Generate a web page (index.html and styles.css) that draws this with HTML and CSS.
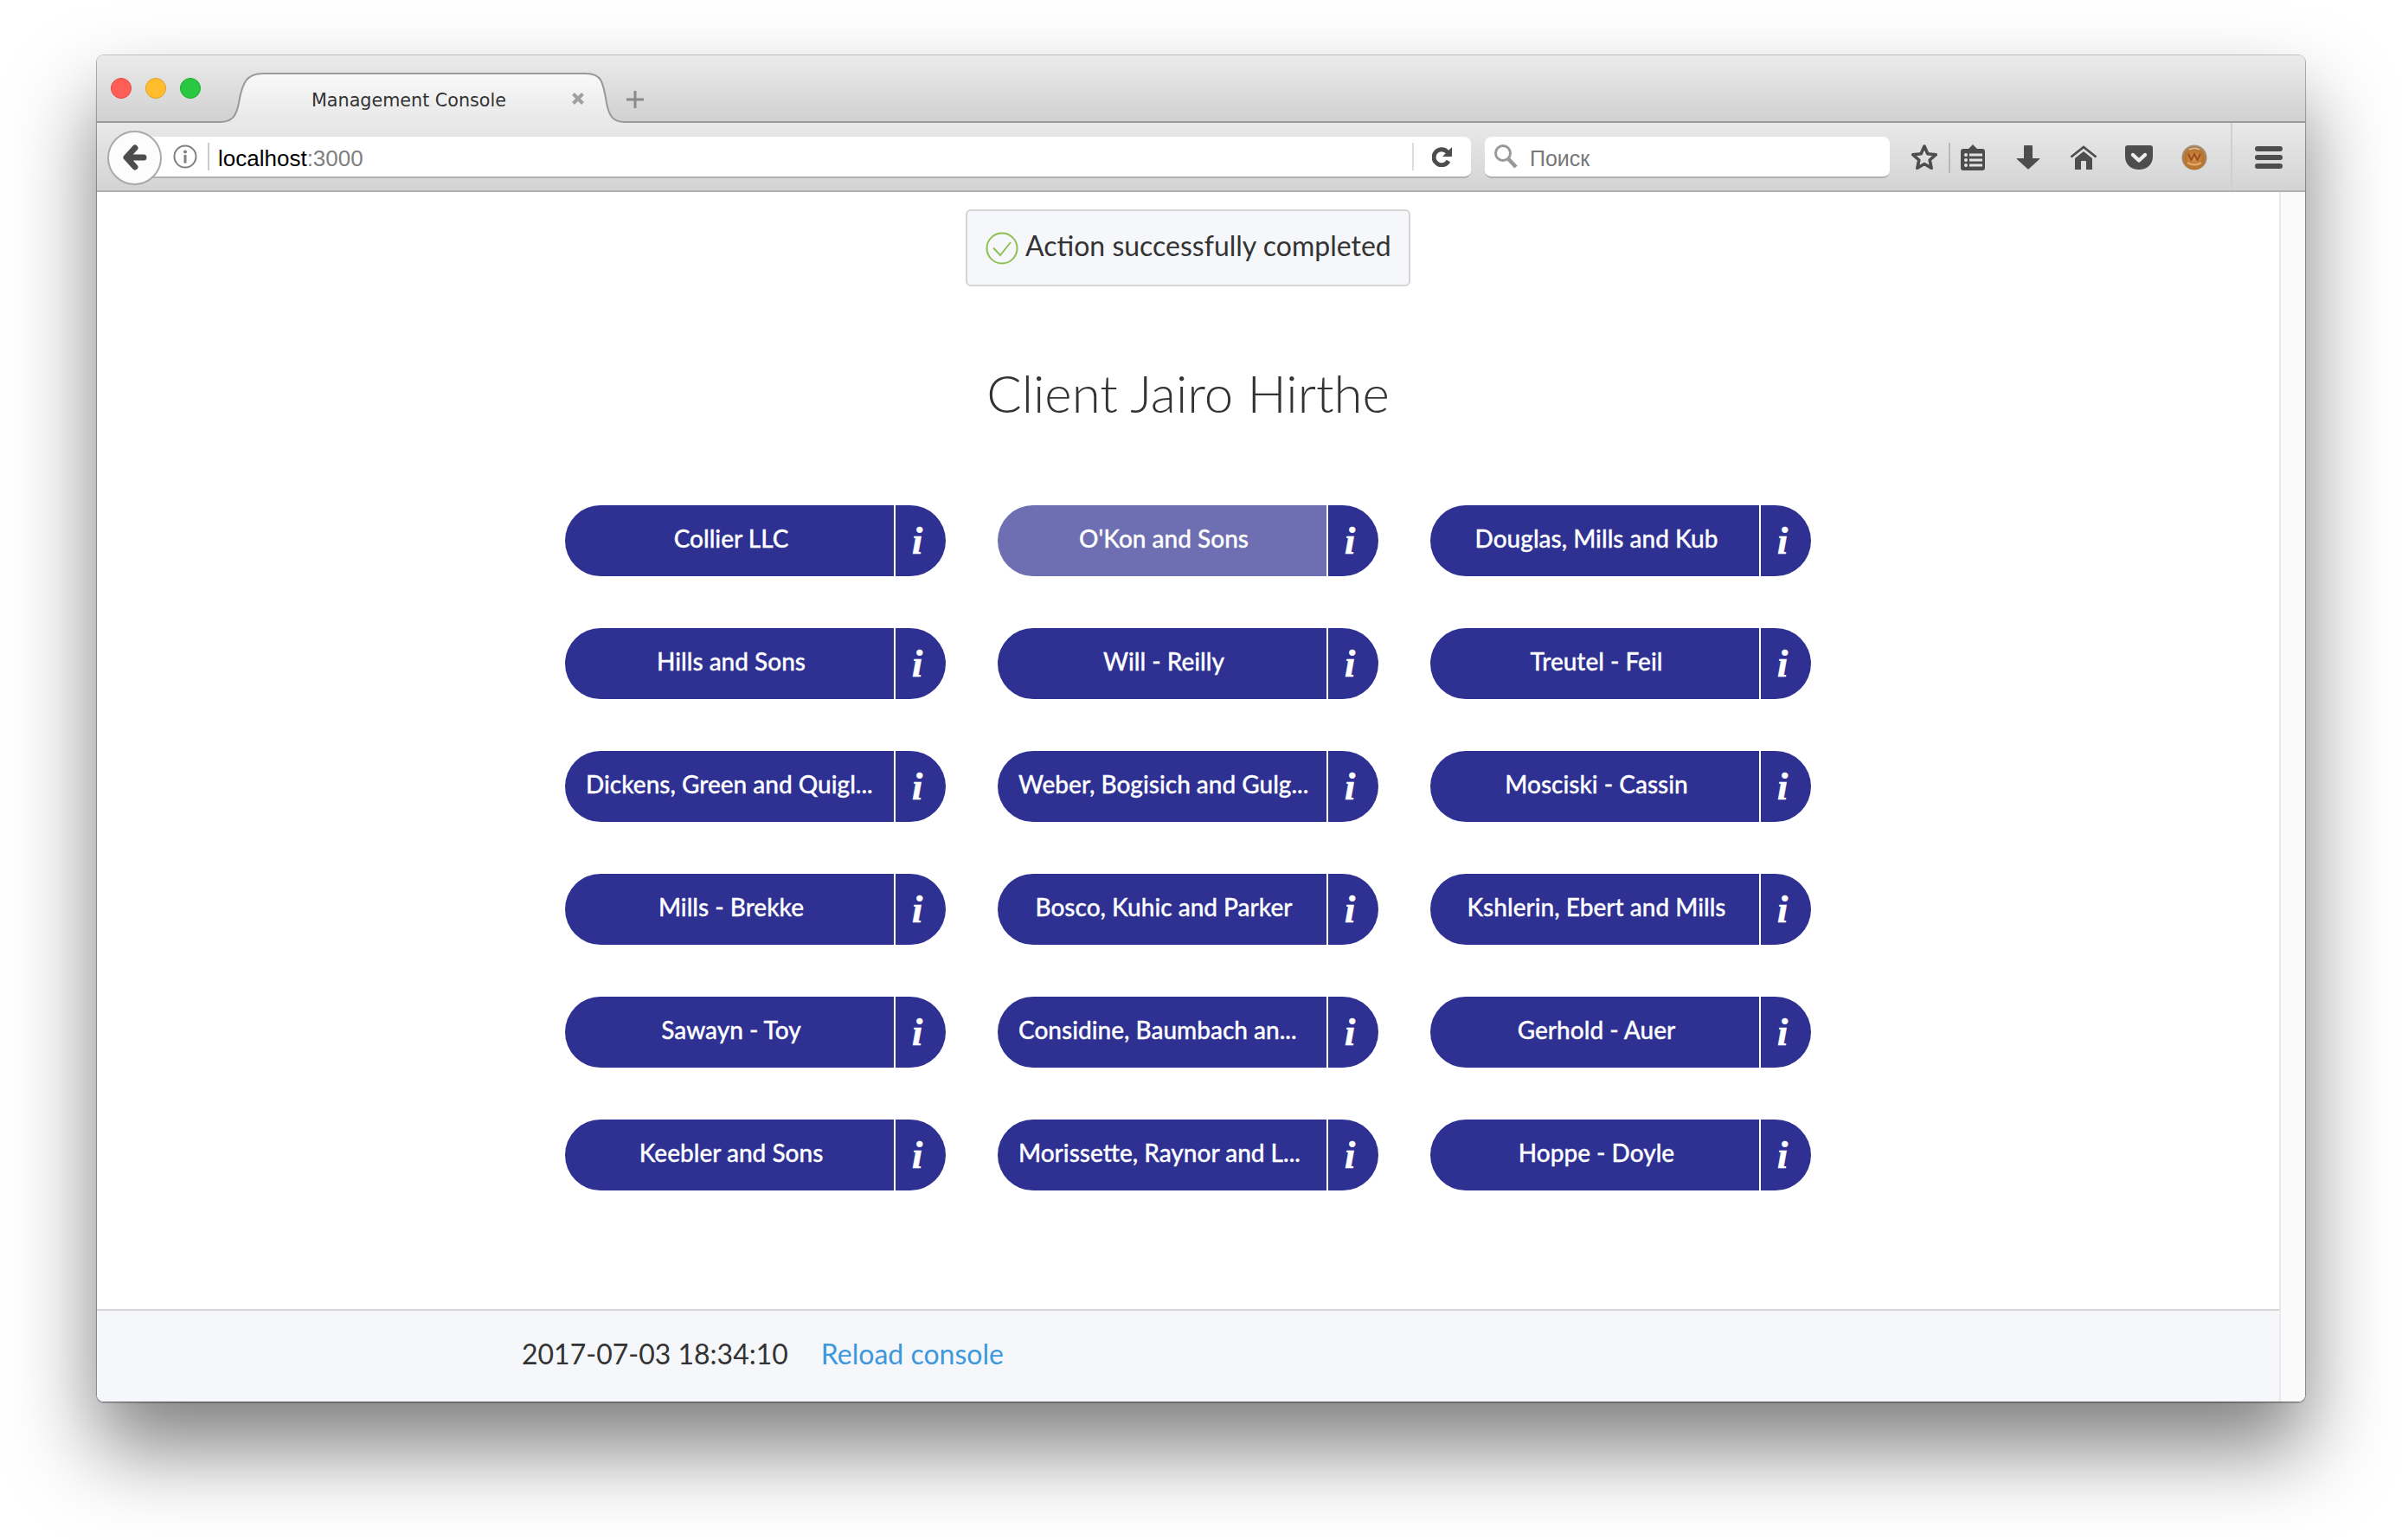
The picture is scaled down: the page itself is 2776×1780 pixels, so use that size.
FILE: index.html
```html
<!DOCTYPE html>
<html lang="en">
<head>
    <meta charset="UTF-8">
    <title>Management Console</title>
    <link rel="stylesheet" href="styles.css">
</head>
<body>
    <div class="window">
        <div class="titlebar">
            <div class="lights">
                <span class="light red"></span>
                <span class="light yellow"></span>
                <span class="light green"></span>
            </div>
            <div class="tab">
                <svg class="tab-shape" width="469" height="58" viewBox="0 0 469 58">
                    <defs>
                        <linearGradient id="tabfill" x1="0" y1="0" x2="0" y2="1">
                            <stop offset="0" stop-color="#f9f9f9"/>
                            <stop offset="1" stop-color="#e8e8e8"/>
                        </linearGradient>
                    </defs>
                    <path d="M0 57C16 57 20 50 23 35C27 10 33 1 51 1L424 1C442 1 444 10 448 35C451 50 455 57 469 57L469 58L0 58Z" fill="url(#tabfill)"/>
                    <path d="M0 57C16 57 20 50 23 35C27 10 33 1 51 1L424 1C442 1 444 10 448 35C451 50 455 57 469 57" fill="none" stroke="#999" stroke-width="2"/>
                </svg>
                <span class="tab-title">Management Console</span>
                <svg class="tab-close" width="16" height="16" viewBox="0 0 16 16">
                    <path d="M2.5 2.5L13.5 13.5M13.5 2.5L2.5 13.5" stroke="#a0a0a0" stroke-width="4" fill="none"/>
                </svg>
            </div>
            <svg class="new-tab" width="22" height="22" viewBox="0 0 22 22">
                <path d="M11 1V21M1 11H21" stroke="#8a8a8a" stroke-width="3" fill="none"/>
            </svg>
        </div>

        <div class="toolbar">
            <div class="back">
                <svg width="28" height="30" viewBox="0 0 28 30">
                    <path d="M14 4L4 15L14 26M5 15H24" stroke="#4d4d4d" stroke-width="7" stroke-linecap="round" stroke-linejoin="round" fill="none"/>
                </svg>
            </div>
            <div class="urlbar">
                <svg class="site-info" width="28" height="28" viewBox="0 0 28 28">
                    <circle cx="14" cy="14" r="12.5" stroke="#808080" stroke-width="2" fill="#fff"/>
                    <circle cx="14" cy="8.5" r="2" fill="#808080"/>
                    <rect x="12.5" y="12" width="3" height="9.5" fill="#808080"/>
                </svg>
                <span class="url"><span class="host">localhost</span>:3000</span>
                <div class="reload">
                    <svg width="24" height="24" viewBox="0 0 24 24">
                        <path d="M18 7A9 9 0 1 0 19 17" stroke="#4d4d4d" stroke-width="5" fill="none"/>
                        <polygon points="23,1 23,12 12,12" fill="#4d4d4d"/>
                    </svg>
                </div>
            </div>
            <div class="searchbar">
                <svg width="30" height="30" viewBox="0 0 30 30">
                    <circle cx="12" cy="11" r="8.5" stroke="#999" stroke-width="3" fill="none"/>
                    <path d="M18 17.5L27 27" stroke="#999" stroke-width="4.5" fill="none"/>
                </svg>
                <span>Поиск</span>
            </div>
            <div class="tool tool-star">
                <svg width="32" height="32" viewBox="0 0 32 32">
                    <polygon points="16,3 19.8,11.7 29.3,12.7 22.2,19 24.2,28.3 16,23.5 7.8,28.3 9.8,19 2.7,12.7 12.2,11.7" stroke="#4d4d4d" stroke-width="3.6" stroke-linejoin="round" fill="none"/>
                </svg>
            </div>
            <span class="tool-sep"></span>
            <div class="tool tool-list">
                <svg width="28" height="30" viewBox="0 0 28 30">
                    <path d="M14 0L19 5H25Q28 5 28 8V27Q28 30 25 30H3Q0 30 0 27V8Q0 5 3 5H9Z" fill="#4d4d4d"/>
                    <circle cx="6" cy="12" r="2" fill="#e2e2e2"/>
                    <circle cx="6" cy="18" r="2" fill="#e2e2e2"/>
                    <circle cx="6" cy="24" r="2" fill="#e2e2e2"/>
                    <rect x="10" y="10.5" width="15" height="3" fill="#e2e2e2"/>
                    <rect x="10" y="16.5" width="15" height="3" fill="#e2e2e2"/>
                    <rect x="10" y="22.5" width="15" height="3" fill="#e2e2e2"/>
                </svg>
            </div>
            <div class="tool">
                <svg width="28" height="28" viewBox="0 0 28 28">
                    <path d="M9 1Q9 0 10 0H18Q19 0 19 1V15H27Q28 15 27 16L15 27Q14 28 13 27L1 16Q0 15 1 15H9Z" fill="#4d4d4d"/>
                </svg>
            </div>
            <div class="tool">
                <svg width="32" height="28" viewBox="0 0 32 28">
                    <path d="M1.5 13.5L16 2L30.5 13.5" stroke="#4d4d4d" stroke-width="2.8" fill="none"/>
                    <path d="M16 7L26 15V28H19V18H13V28H6V15Z" fill="#4d4d4d"/>
                </svg>
            </div>
            <div class="tool">
                <svg width="32" height="28" viewBox="0 0 32 28">
                    <path d="M3 0H29Q32 0 32 3V13C32 22 25 28 16 28C7 28 0 22 0 13V3Q0 0 3 0Z" fill="#4d4d4d"/>
                    <path d="M9 11L16 17.5L23 11" stroke="#ececec" stroke-width="4.4" stroke-linecap="round" stroke-linejoin="round" fill="none"/>
                </svg>
            </div>
            <div class="tool">
                <svg width="30" height="30" viewBox="0 0 30 30">
                    <defs>
                        <radialGradient id="avatarfill" cx="0.5" cy="0.55" r="0.55">
                            <stop offset="0" stop-color="#d98d45"/>
                            <stop offset="0.7" stop-color="#b5742f"/>
                            <stop offset="1" stop-color="#a39484"/>
                        </radialGradient>
                    </defs>
                    <circle cx="15" cy="15" r="14.5" fill="url(#avatarfill)"/>
                    <path d="M8 11L11.5 18L15 11L18.5 18L22 11" stroke="#9c4a22" stroke-width="1.8" fill="none"/>
                    <path d="M7 21Q15 26 23 21" stroke="#e8b070" stroke-width="2" fill="none"/>
                    <path d="M9 6Q15 3 21 6" stroke="#e0c0a0" stroke-width="1.5" fill="none"/>
                </svg>
            </div>
            <span class="tool-divider"></span>
            <div class="tool tool-menu">
                <span class="menu-icon">
                    <span></span>
                    <span></span>
                    <span></span>
                </span>
            </div>
        </div>

        <div class="viewport">
            <div class="page">
                <main class="content">
                    <div class="notice">
                        <svg width="38" height="38" viewBox="0 0 38 38">
                            <circle cx="19" cy="19" r="17.5" stroke="#8cc152" stroke-width="2" fill="none"/>
                            <path d="M9 18.5L17 27L29 12" stroke="#8cc152" stroke-width="2" fill="none"/>
                        </svg>
                        <span>Action successfully completed</span>
                    </div>
                    <h1>Client Jairo Hirthe</h1>
                    <div class="companies">
                        <div class="company"><a class="company-name">Collier LLC</a><a class="company-info">i</a></div>
                        <div class="company hover"><a class="company-name">O'Kon and Sons</a><a class="company-info">i</a></div>
                        <div class="company"><a class="company-name">Douglas, Mills and Kub</a><a class="company-info">i</a></div>
                        <div class="company"><a class="company-name">Hills and Sons</a><a class="company-info">i</a></div>
                        <div class="company"><a class="company-name">Will - Reilly</a><a class="company-info">i</a></div>
                        <div class="company"><a class="company-name">Treutel - Feil</a><a class="company-info">i</a></div>
                        <div class="company"><a class="company-name cut">Dickens, Green and Quigl...</a><a class="company-info">i</a></div>
                        <div class="company"><a class="company-name cut">Weber, Bogisich and Gulg...</a><a class="company-info">i</a></div>
                        <div class="company"><a class="company-name">Mosciski - Cassin</a><a class="company-info">i</a></div>
                        <div class="company"><a class="company-name">Mills - Brekke</a><a class="company-info">i</a></div>
                        <div class="company"><a class="company-name">Bosco, Kuhic and Parker</a><a class="company-info">i</a></div>
                        <div class="company"><a class="company-name">Kshlerin, Ebert and Mills</a><a class="company-info">i</a></div>
                        <div class="company"><a class="company-name">Sawayn - Toy</a><a class="company-info">i</a></div>
                        <div class="company"><a class="company-name cut">Considine, Baumbach an...</a><a class="company-info">i</a></div>
                        <div class="company"><a class="company-name">Gerhold - Auer</a><a class="company-info">i</a></div>
                        <div class="company"><a class="company-name">Keebler and Sons</a><a class="company-info">i</a></div>
                        <div class="company"><a class="company-name cut">Morissette, Raynor and L...</a><a class="company-info">i</a></div>
                        <div class="company"><a class="company-name">Hoppe - Doyle</a><a class="company-info">i</a></div>
                    </div>
                </main>
                <footer class="footer">
                    <span class="timestamp">2017-07-03 18:34:10</span>
                    <a class="reload-link">Reload console</a>
                </footer>
            </div>
            <div class="scrollbar"></div>
        </div>
    </div>
</body>
</html>
```

FILE: styles.css
```css
html, body {
    margin: 0;
    padding: 0;
}
body {
    height: 1780px;
    box-sizing: border-box;
    padding: 64px 112px 160px 112px;
    background: #fff;
    overflow: hidden;
    font-family: "Lato", sans-serif;
    color: #333;
}
.window {
    height: 100%;
    display: flex;
    flex-direction: column;
    border-radius: 8px;
    overflow: hidden;
    box-shadow: 0 0 0 1px rgba(0,0,0,0.2), 0 1px 2px rgba(0,0,0,0.4), 0 54px 96px rgba(0,0,0,0.5);
}

/* title bar */
.titlebar {
    height: 78px;
    flex: none;
    display: flex;
    align-items: flex-end;
    background: linear-gradient(#ebebeb, #d0d0d0);
    box-shadow: inset 0 -2px 0 #9a9a9a;
}
.lights {
    align-self: flex-start;
    display: flex;
    gap: 16px;
    margin: 26px 21px 0 16px;
}
.light {
    width: 24px;
    height: 24px;
    box-sizing: border-box;
    border-radius: 50%;
    border: 1px solid;
}
.red { background: #ff5f57; border-color: #e2463f; }
.yellow { background: #ffbd2e; border-color: #dfa123; }
.green { background: #28c940; border-color: #1aab29; }
.tab {
    position: relative;
    width: 469px;
    height: 58px;
    display: flex;
    align-items: center;
}
.tab-shape {
    position: absolute;
    left: 0;
    top: 0;
}
.tab-title {
    position: relative;
    margin-left: 107px;
    padding-top: 6px;
    width: 300px;
    font-family: "DejaVu Sans", sans-serif;
    font-size: 20.7px;
    color: #333;
}
.tab-close {
    position: relative;
    margin-top: 2px;
}
.new-tab {
    margin: 0 0 16px 1px;
}

/* toolbar */
.toolbar {
    height: 80px;
    flex: none;
    display: flex;
    align-items: center;
    padding-left: 12px;
    background: linear-gradient(#e9e9e9, #d3d3d3);
    box-shadow: inset 0 -2px 0 #b0b0b0;
}
.back {
    position: relative;
    z-index: 1;
    width: 63px;
    height: 63px;
    box-sizing: border-box;
    flex: none;
    display: flex;
    align-items: center;
    justify-content: center;
    background: #fcfcfc;
    border: 2px solid #aaa;
    border-radius: 50%;
    margin-right: -12px;
}
.urlbar {
    width: 1525px;
    height: 48px;
    box-sizing: border-box;
    flex: none;
    display: flex;
    align-items: center;
    background: #fff;
    border-bottom: 2px solid #b0b0b0;
    border-radius: 0 8px 8px 0;
}
.site-info {
    margin-left: 25px;
}
.url {
    flex: 1;
    margin-left: 12px;
    padding-left: 10px;
    border-left: 2px solid #ccc;
    height: 32px;
    line-height: 36px;
    font-family: "Liberation Sans", sans-serif;
    font-size: 26px;
    color: #808080;
}
.host {
    color: #000;
}
.reload {
    width: 68px;
    height: 32px;
    box-sizing: border-box;
    border-left: 2px solid #ddd;
    display: flex;
    align-items: center;
    justify-content: center;
}
.searchbar {
    width: 468px;
    height: 48px;
    margin: 0 0 0 16px;
    box-sizing: border-box;
    flex: none;
    display: flex;
    align-items: center;
    padding-left: 9px;
    background: #fff;
    border-bottom: 2px solid #b0b0b0;
    border-radius: 8px;
    font-family: "Liberation Sans", sans-serif;
    font-size: 25px;
    color: #777;
}
.searchbar span {
    margin-left: 13px;
    padding-top: 4px;
}
.tool {
    width: 64px;
    height: 36px;
    flex: none;
    display: flex;
    align-items: center;
    justify-content: center;
}
.tool-star {
    width: 56px;
    margin-left: 12px;
}
.tool-sep {
    width: 2px;
    height: 35px;
    flex: none;
    background: #b8b8b8;
}
.tool-list {
    width: 52px;
    margin-right: 6px;
}
.tool-divider {
    width: 2px;
    height: 78px;
    margin: 0 0 2px 10px;
    flex: none;
    background: #cfcfcf;
}
.tool-menu {
    width: 84px;
}
.menu-icon {
    width: 32px;
    display: flex;
    flex-direction: column;
    gap: 4px;
}
.menu-icon span {
    height: 6px;
    border-radius: 3px;
    background: #4d4d4d;
}

/* page */
.viewport {
    flex: 1;
    display: flex;
    min-height: 0;
    background: #fff;
}
.page {
    flex: 1;
    display: flex;
    flex-direction: column;
}
.scrollbar {
    width: 28px;
    flex: none;
    background: #fafafa;
    border-left: 2px solid #e8e8e8;
}
.content {
    flex: 1;
    display: flex;
    flex-direction: column;
    align-items: center;
    padding-top: 20px;
}
.notice {
    height: 89px;
    width: 514px;
    box-sizing: border-box;
    display: flex;
    align-items: center;
    gap: 8px;
    padding: 0 0 0 21px;
    background: #f5f7fb;
    border: 2px solid #d5d5d5;
    border-radius: 6px;
    font-size: 32px;
    color: #333;
}
.notice span {
    padding-bottom: 6px;
}
h1 {
    margin: 87px 0 0 0;
    height: 106px;
    line-height: 72px;
    font-size: 60px;
    font-weight: 300;
    color: #333;
}
.companies {
    margin-top: 60px;
    display: grid;
    grid-template-columns: repeat(3, 440px);
    gap: 60px;
}
.company {
    display: flex;
    height: 82px;
    border-radius: 41px;
    overflow: hidden;
    color: #fff;
}
.company-name {
    width: 380px;
    flex: none;
    box-sizing: border-box;
    padding: 0 0 6px 4px;
    display: flex;
    align-items: center;
    justify-content: center;
    background: #2e3192;
    font-size: 28px;
    font-weight: 500;
    -webkit-text-stroke: 0.3px #fff;
    white-space: nowrap;
}
.company-name.cut {
    justify-content: flex-start;
    padding-left: 24px;
}
.hover .company-name {
    background: #6e6eb2;
}
.company-info {
    flex: 1;
    margin-left: 2px;
    padding-right: 8px;
    display: flex;
    align-items: center;
    justify-content: center;
    background: #2e3192;
    font-family: "Liberation Serif", serif;
    font-size: 44px;
    font-style: italic;
    font-weight: bold;
    -webkit-text-stroke: 0.6px #fff;
}
.footer {
    height: 107px;
    flex: none;
    box-sizing: border-box;
    display: flex;
    align-items: center;
    gap: 38px;
    padding: 0 0 6px 491px;
    background: #f5f7fb;
    border-top: 2px solid #d5d5d5;
    font-size: 32px;
}
.reload-link {
    color: #3d97db;
}
```
